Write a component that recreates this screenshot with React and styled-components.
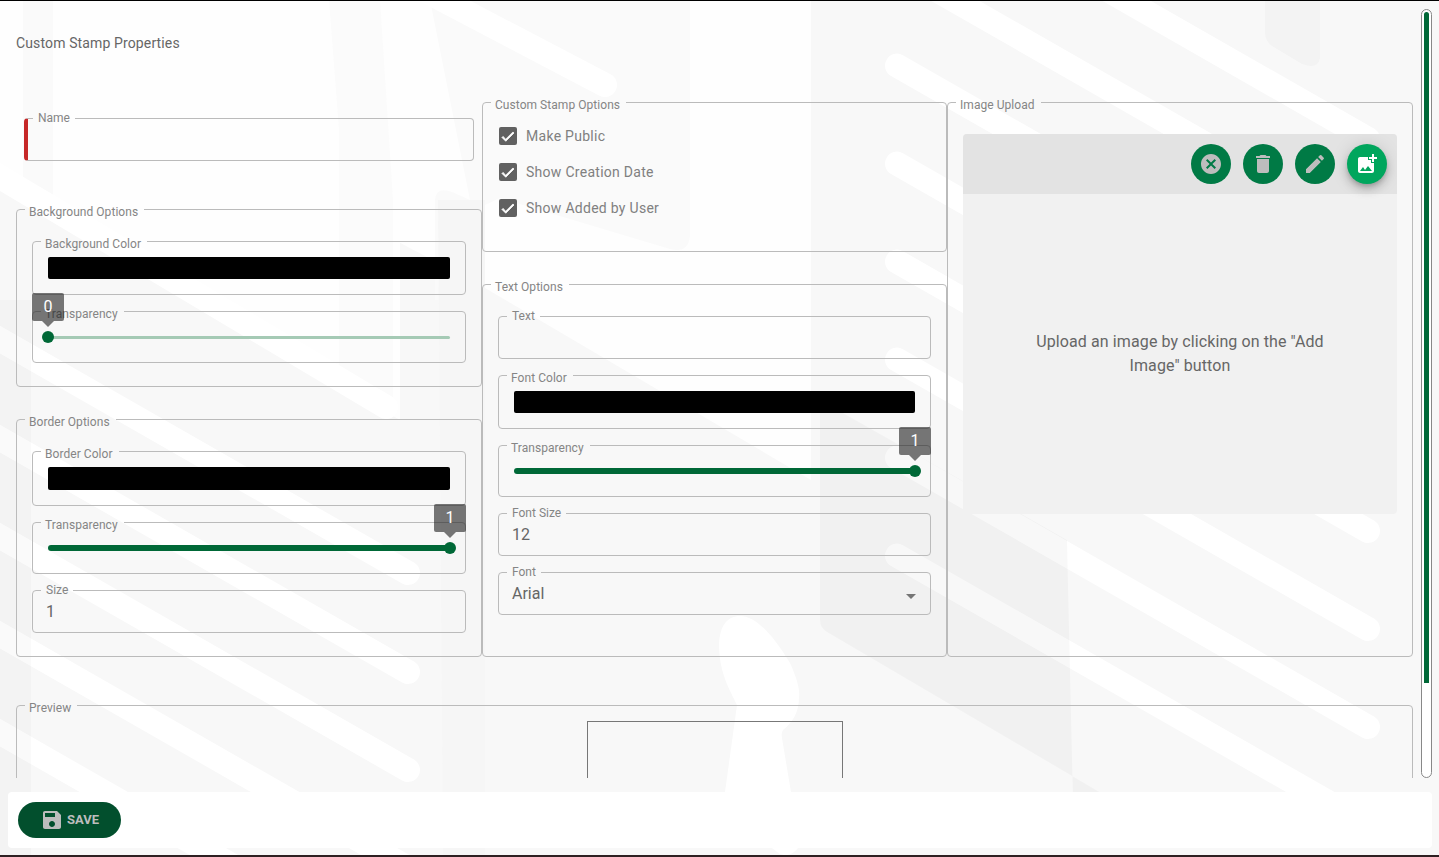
import React from "react";
import styled, { createGlobalStyle } from "styled-components";

const Global = createGlobalStyle`
  html, body { margin: 0; padding: 0; height: 100%; overflow: hidden; }
  body { font-family: Roboto, "Liberation Sans", sans-serif; color: #666; }
  * { box-sizing: border-box; }
`;

const Page = styled.div`
  position: relative;
  isolation: isolate;
  width: 1439px;
  height: 857px;
  display: flex;
  flex-direction: column;
  background: #f8f8f8;
  border-top: 1px solid #000;
  border-bottom: 2px solid #2e2022;
  overflow: hidden;
`;
const Backdrop = styled.svg`
  position: absolute;
  left: 0;
  top: -1px;
  width: 1439px;
  height: 857px;
  z-index: -1;
`;
const MainRow = styled.div`
  height: 777px;
  flex: none;
  display: flex;
  padding-right: 7px;
`;
const Content = styled.main`
  flex: 1;
  min-width: 0;
  overflow: hidden;
  padding: 34px 8px 0 16px;
`;
const Title = styled.h1`
  margin: 0 0 42px;
  font-size: 14px;
  line-height: 16px;
  font-weight: 400;
  letter-spacing: 0.13px;
  color: #666;
`;
const Columns = styled.div`
  display: grid;
  grid-template-columns: 466px 465px 466px;
`;
const Column = styled.div`
  display: flex;
  flex-direction: column;
  min-width: 0;
`;

const Group = styled.fieldset`
  margin: ${(p) => p.$mt || 0}px 0 0;
  padding: ${(p) => p.$pt || 0}px 15px ${(p) => p.$pb || 0}px;
  min-width: 0;
  border: 1px solid #bbb;
  border-radius: 4px;
  ${(p) => (p.$h ? `height: ${p.$h}px;` : "")}
  ${(p) => (p.$grow ? "flex: 1;" : "")}
  display: block;
`;
const GroupLegend = styled.legend`
  margin-left: -7px;
  padding: 6px 6px 0 4px;
  font-size: 12px;
  line-height: 13px;
  letter-spacing: 0.05px;
  color: #858585;
`;
const Stack = styled.div`
  display: flex;
  flex-direction: column;
`;

const Field = styled.fieldset`
  margin: ${(p) => p.$mt || 0}px ${(p) => p.$mx || 0}px 0;
  padding: 0 13px;
  height: 49px;
  min-width: 0;
  border: 1px solid #bbb;
  ${(p) => (p.$required ? "border-left: 4px solid #c62828;" : "")}
  border-radius: 4px;
  display: flex;
  position: relative;
`;
const FieldLegend = styled.legend`
  margin-left: ${(p) => (p.$required ? -8 : -5)}px;
  padding: 0 5px;
  font-size: 12px;
  line-height: 13px;
  color: #858585;
`;
const FieldValue = styled.div`
  font-size: 16px;
  line-height: 24px;
  margin-top: 3px;
  color: #666;
  flex: 1;
`;
const Caret = styled.svg`
  width: 24px;
  height: 24px;
  fill: #757575;
  margin: 5px -6px 0 0;
`;

const Swatch = styled.div`
  height: ${(p) => p.$h || 22}px;
  margin-top: 6px;
  background: #000;
  border-radius: 2px;
`;

const SliderBox = styled.div`
  position: relative;
  height: 12px;
  margin-top: 10px;
  display: flex;
  align-items: center;
`;
const Rail = styled.div`
  width: 100%;
  height: ${(p) => (p.$value ? 6 : 3)}px;
  border-radius: 3px;
  background: ${(p) => (p.$value ? "#006837" : "#a5cab5")};
`;
const Thumb = styled.div`
  position: absolute;
  top: 0;
  left: ${(p) => (p.$value ? "100%" : "0")};
  width: 12px;
  height: 12px;
  margin-left: -6px;
  border-radius: 50%;
  background: #006837;
`;
const Bubble = styled.div`
  position: absolute;
  left: ${(p) => (p.$value ? "100%" : "0")};
  top: -38px;
  width: 32px;
  height: 28px;
  margin-left: -16px;
  border-radius: 2px;
  background: rgba(30, 30, 30, 0.6);
  color: #fff;
  font-size: 16px;
  line-height: 28px;
  text-align: center;
  &::after {
    content: "";
    position: absolute;
    left: 10px;
    top: 28px;
    border: 6px solid transparent;
    border-bottom: 0;
    border-top-color: rgba(30, 30, 30, 0.6);
  }
`;

const CheckRow = styled.label`
  display: flex;
  align-items: center;
  height: 36px;
  gap: 9px;
  padding-left: 1px;
  font-size: 14px;
  letter-spacing: 0.28px;
  color: #808080;
`;
const CheckBox = styled.span`
  width: 18px;
  height: 18px;
  border-radius: 2px;
  background: #616161;
  display: flex;
  align-items: center;
  justify-content: center;
  svg { width: 18px; height: 18px; fill: #fff; stroke: #fff; stroke-width: 1px; }
`;

const Panel = styled.div`
  height: 380px;
  margin-top: 22px;
  border-radius: 4px;
  background: #f1f1f1;
  overflow: hidden;
  display: flex;
  flex-direction: column;
`;
const PanelBar = styled.div`
  height: 60px;
  flex: none;
  background: #e3e3e3;
  display: flex;
  align-items: center;
  justify-content: flex-end;
  gap: 12px;
  padding-right: 10px;
`;
const RoundButton = styled.button`
  width: 40px;
  height: 40px;
  padding: 0;
  border: 0;
  border-radius: 50%;
  display: flex;
  align-items: center;
  justify-content: center;
  background: ${(p) => (p.$primary ? "#00a65d" : "#007a45")};
  box-shadow: ${(p) => (p.$primary ? "0 3px 5px -1px rgba(0,0,0,.2), 0 6px 10px 0 rgba(0,0,0,.14), 0 1px 18px 0 rgba(0,0,0,.12)" : "none")};
  svg { width: 24px; height: 24px; fill: ${(p) => (p.$primary ? "#fff" : "#bdbdbd")}; }
`;
const PanelBody = styled.div`
  flex: 1;
  display: flex;
  align-items: center;
  justify-content: center;
  padding: 0 50px;
  text-align: center;
  font-size: 16px;
  line-height: 24px;
  letter-spacing: 0.1px;
  color: #666;
`;

const StampBox = styled.div`
  width: 256px;
  height: 300px;
  margin: 6px auto 0;
  border: 1px solid #777;
`;

const ScrollTrack = styled.div`
  width: 11px;
  flex: none;
  margin-top: 8px;
  padding: 2px;
  border: 1px solid #888;
  border-radius: 6px;
  background: #fff;
`;
const ScrollThumb = styled.div`
  height: 671px;
  border-radius: 3px 3px 0 0;
  background: #006837;
`;

const Footer = styled.footer`
  margin: 14px 7px 0 8px;
  height: 56px;
  flex: none;
  padding: 10px;
  border-radius: 4px;
  background: #fff;
`;
const SaveButton = styled.button`
  width: 103px;
  height: 36px;
  padding: 0 0 0 22px;
  border: 0;
  border-radius: 18px;
  display: flex;
  align-items: center;
  gap: 3px;
  background: #024f2d;
  color: #bdbdbd;
  font: 700 13px/16px Roboto, sans-serif;
  svg { width: 24px; height: 24px; fill: #bdbdbd; }
  span { margin-top: -1px; }
`;

const Icon = ({ d }) => (
  <svg viewBox="0 0 24 24"><path d={d} /></svg>
);
const paths = {
  cancel: "M12 2C6.47 2 2 6.47 2 12s4.47 10 10 10 10-4.47 10-10S17.53 2 12 2zm5 13.59L15.59 17 12 13.41 8.41 17 7 15.59 10.59 12 7 8.41 8.41 7 12 10.59 15.59 7 17 8.41 13.41 12 17 15.59z",
  del: "M6 19c0 1.1.9 2 2 2h8c1.1 0 2-.9 2-2V7H6v12zM19 4h-3.5l-1-1h-5l-1 1H5v2h14V4z",
  edit: "M3 17.25V21h3.75L17.81 9.94l-3.75-3.75L3 17.25zM20.71 7.04c.39-.39.39-1.02 0-1.41l-2.34-2.34a.9959.9959 0 0 0-1.41 0l-1.83 1.83 3.75 3.75 1.83-1.83z",
  add: "M19 7v2.99s-1.99.01-2 0V7h-3s.01-1.99 0-2h3V2h2v3h3v2h-3zm-3 4V8h-3V5H5c-1.1 0-2 .9-2 2v12c0 1.1.9 2 2 2h12c1.1 0 2-.9 2-2v-8h-3zM5 19l3-4 2 3 3-4 4 5H5z",
  save: "M17 3H5c-1.11 0-2 .9-2 2v14c0 1.1.89 2 2 2h14c1.1 0 2-.9 2-2V7l-4-4zm-5 16c-1.66 0-3-1.34-3-3s1.34-3 3-3 3 1.34 3 3-1.34 3-3 3zm3-10H5V5h10v4z",
  check: "M9 16.17 5.3 12.5l-1.4 1.4L9 19 20 8l-1.4-1.4z",
};

const TextField = ({ label, value, select, required, mt, mx }) => (
  <Field $mt={mt} $mx={mx} $required={required}>
    <FieldLegend $required={required}>{label}</FieldLegend>
    <FieldValue>{value}</FieldValue>
    {select && <Caret viewBox="0 0 24 24"><path d="M7 10l5 5 5-5z" /></Caret>}
  </Field>
);
const ColorField = ({ label, h, boxH, mt }) => (
  <Group $pt={0} $h={boxH} $mt={mt}>
    <GroupLegend>{label}</GroupLegend>
    <Swatch $h={h} />
  </Group>
);
const SliderField = ({ value, mt }) => (
  <Group $h={61} $mt={mt}>
    <GroupLegend>Transparency</GroupLegend>
    <SliderBox>
      <Rail $value={value} />
      <Bubble $value={value}>{value}</Bubble>
      <Thumb $value={value} />
    </SliderBox>
  </Group>
);
const Check = ({ children }) => (
  <CheckRow>
    <CheckBox><Icon d={paths.check} /></CheckBox>
    {children}
  </CheckRow>
);

const stripes = [
  ...[0, 1, 2, 3, 4, 5, 6, 7].map((k) => {
    const end = 139 + 98 * k;
    const x0 = k < 2 ? 820 : 897;
    return [x0, end - 0.572 * (1368 - x0), 1368, end];
  }),
  [-20, 165, 386, 407],
  ...[573, 672, 770, 868, 966].map((end) => [-20, end - 0.572 * 428, 408, end]),
  [420, -12, 605, 85],
];

const Decor = () => (
  <Backdrop viewBox="0 0 1439 857" aria-hidden="true">
    <path fill="#fefefe" d="M300 0H811V480L480 285L300 190z" />
    <path fill="#fefefe" d="M0 0H400V420L0 185z" />
    <path fill="#fafafa" d="M23 0H53V192Q53 205 40 205H23z" />
    <path fill="#fbfbfb" d="M329 0H380L393 200V400Q392 412 378 408L345 388Q339 385 339 378V130z" />
    <path fill="#fafafa" d="M430 0H690V236Q688 254 670 249L500 198L485 205V300H435V200Q436 186 452 192L470 200z" />
    <path fill="#f8f8f8" d="M811 0H940V500H811z" />
    <path fill="#f6f6f6" d="M438 200H485V857H443z" />
    <path fill="#f3f3f3" d="M1265 0H1320V58Q1318 70 1302 64L1272 46Q1266 42 1265 34z" />
    {stripes.map(([a, b, c, d], i) => (
      <line key={i} x1={a} y1={b} x2={c} y2={d} stroke="#fff" strokeWidth="24" strokeLinecap="round" />
    ))}
    <path fill="#fff" d="M719 647C719 625 728 616 740 616C757 616 775 638 790 663C797 678 800 690 799 697C799 712 793 722 783 730Q781 733 782 738L791 792L798 848Q790 858 780 854L772 848L725 792L737 705C730 690 720 675 719 647z" />
    <path fill="rgba(0,0,0,.028)" d="M820 400L1067 540L1073 800H1113L827 632Q820 628 820 620z" />
    <path fill="rgba(0,0,0,.02)" d="M0 300H31V857H0z" />
  </Backdrop>
);

export default function App() {
  return (
    <Page>
      <Global />
      <Decor />
      <MainRow>
        <Content>
          <Title>Custom Stamp Properties</Title>
          <Columns>
            <Column>
              <TextField label="Name" required mt={19} mx={8} />
              <Group $mt={39} $pt={13} $pb={23}>
                <GroupLegend>Background Options</GroupLegend>
                <Stack>
                  <ColorField label="Background Color" h={22} boxH={63} />
                  <SliderField value={0} mt={7} />
                </Stack>
              </Group>
              <Group $mt={23} $pt={13} $pb={23}>
                <GroupLegend>Border Options</GroupLegend>
                <Stack>
                  <ColorField label="Border Color" h={23} boxH={64} />
                  <SliderField value={1} mt={7} />
                  <TextField label="Size" value="1" mt={10} />
                </Stack>
              </Group>
            </Column>
            <Column>
              <Group $pt={6} $h={159}>
                <GroupLegend>Custom Stamp Options</GroupLegend>
                <Check>Make Public</Check>
                <Check>Show Creation Date</Check>
                <Check>Show Added by User</Check>
              </Group>
              <Group $mt={23} $pt={16} $grow>
                <GroupLegend>Text Options</GroupLegend>
                <Stack>
                  <TextField label="Text" />
                  <ColorField label="Font Color" h={22} boxH={63} mt={7} />
                  <SliderField value={1} mt={7} />
                  <TextField label="Font Size" value="12" mt={10} />
                  <TextField label="Font" value="Arial" select mt={10} />
                </Stack>
              </Group>
            </Column>
            <Column>
              <Group $grow>
                <GroupLegend>Image Upload</GroupLegend>
                <Panel>
                  <PanelBar>
                    <RoundButton><Icon d={paths.cancel} /></RoundButton>
                    <RoundButton><Icon d={paths.del} /></RoundButton>
                    <RoundButton><Icon d={paths.edit} /></RoundButton>
                    <RoundButton $primary><Icon d={paths.add} /></RoundButton>
                  </PanelBar>
                  <PanelBody>Upload an image by clicking on the "Add Image" button</PanelBody>
                </Panel>
              </Group>
            </Column>
          </Columns>
          <Group $mt={39}>
            <GroupLegend>Preview</GroupLegend>
            <StampBox />
          </Group>
        </Content>
        <ScrollTrack><ScrollThumb /></ScrollTrack>
      </MainRow>
      <Footer>
        <SaveButton><Icon d={paths.save} /><span>SAVE</span></SaveButton>
      </Footer>
    </Page>
  );
}
